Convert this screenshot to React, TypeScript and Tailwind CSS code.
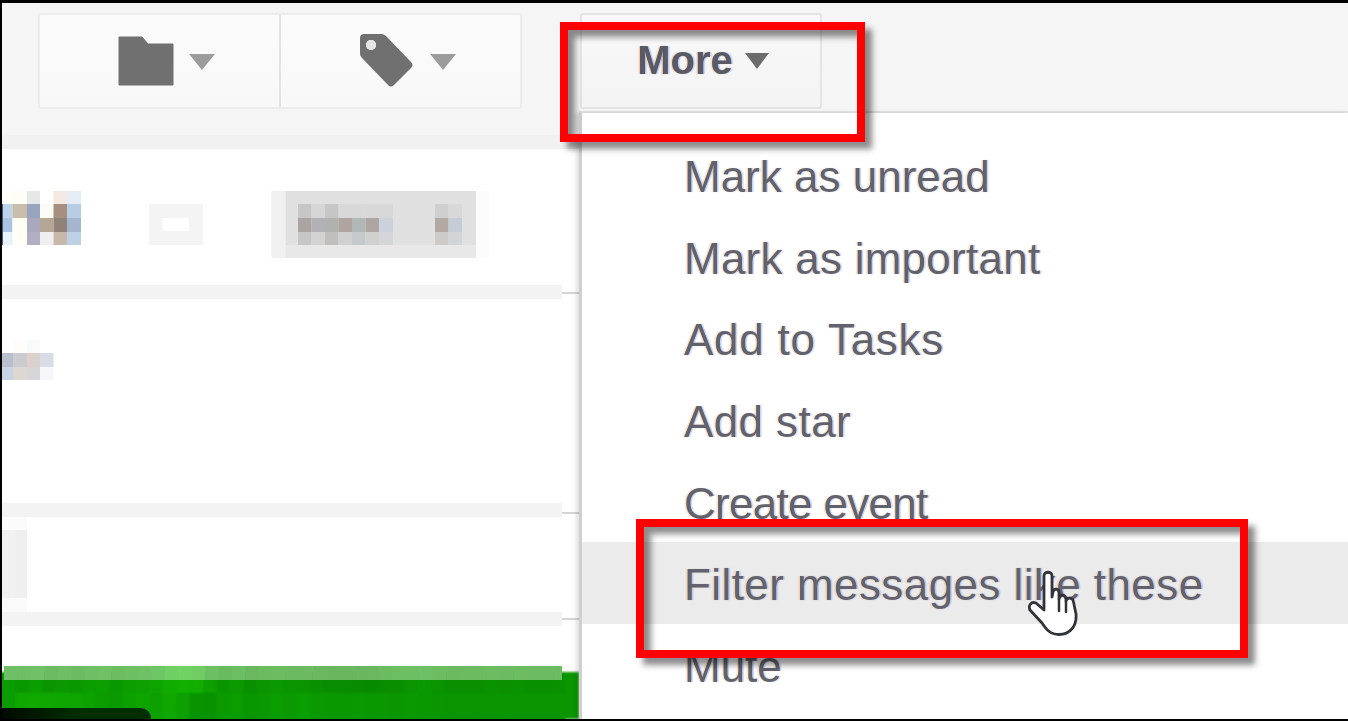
import React from "react";

type Block = [number, number, number, number, string];

const H = [3, 12.5, 27, 40, 53.5, 67, 81];
const rowFrom = (y: number, h: number, colors: string[], xs: number[] = H): Block[] =>
  colors.map((c, i) => [xs[i], y, xs[i + 1] - xs[i], h, c] as Block);

const X3 = [298, 311.5, 325, 338.5, 352, 365.5, 379, 393];
const X3b = [435, 448.5, 462];

// Mosaic coordinates: x is page x, y is local to the row
const row1: Block[] = [
  [2, 55, 1.5, 41, "#3a5f90"],
  ...rowFrom(42, 13, ["#fffefa", "#fffdf8", "#e3e7e8", "#ffffff", "#f3e8e2", "#e4ecf6"]),
  ...rowFrom(55, 14, ["#bcd3ea", "#c8bcab", "#97a5bd", "#fdfbf5", "#a68f80", "#b8cde4"]),
  ...rowFrom(69, 14, ["#a9c4e0", "#fffef5", "#aaa8bf", "#b6a795", "#8f8378", "#a3b6cd"]),
  ...rowFrom(83, 13, ["#e6f3fb", "#fffff5", "#b2afc4", "#efefef", "#c8b8aa", "#bdd0e4"]),
  [149, 55, 54, 41, "#f4f4f4"],
  [162.5, 69, 26.5, 13, "#ffffff"],
  [271.5, 42, 14, 67, "#f0f0f0"],
  [285.5, 42, 190.5, 54, "#e0e0e0"],
  [285.5, 96, 190.5, 13, "#e8e8e8"],
  [476, 42, 13, 67, "#fcfcfc"],
  ...rowFrom(55, 14, ["#c6c6c6", "#d6d6d6", "#c6c6c6", "#d8d8d8", "#d8d8d8", "#d8d8d8", "#d8d8d8"], X3),
  ...rowFrom(69, 14, ["#aba3a1", "#b2b2b6", "#b0b2b0", "#aea4a0", "#b2b8b8", "#aea6a2", "#ccd2dc"], X3),
  ...rowFrom(83, 13, ["#c6c6c6", "#d2d2d2", "#c2bebc", "#d0d0d0", "#c4caca", "#d0d0d0", "#d4d6da"], X3),
  ...rowFrom(55, 14, ["#cfcfcf", "#d8d8d8"], X3b),
  ...rowFrom(69, 14, ["#b2a8a4", "#c6ccd6"], X3b),
  ...rowFrom(83, 13, ["#cfcaca", "#d2d4d8"], X3b),
];

const X4 = [2, 13, 27, 40, 53.5];
const row2: Block[] = [
  ...rowFrom(41, 13, ["#ffffff", "#fffdf9", "#f9fafc", "#ffffff"], X4),
  ...rowFrom(54, 14, ["#b8c0d0", "#ccccd0", "#dcd0cc", "#d8dce6"], X4),
  ...rowFrom(68, 13, ["#c8d4e4", "#dcd8d0", "#d6d6d8", "#f6f7fa"], X4),
];

const row3: Block[] = [
  [2, 0, 25, 13, "#fbfbfb"],
  [2, 13, 25, 68, "#efefef"],
  [2, 13, 13, 68, "#f1f1f1"],
  [2, 81, 25, 14, "#fafafa"],
];

const greenTop = [
  "#0a9c00", "#0a9800", "#0b9e00", "#0a9500", "#0a9a00", "#0a9700", "#0b9c00", "#0c9f00", "#0a9800", "#0c9e00",
  "#0f9f00", "#0ea400", "#11ac00", "#12b000", "#11ae00", "#0da000", "#0a9500", "#0b9a00", "#089000", "#0a9600",
  "#0b9800", "#0a9400", "#0a9500", "#089000", "#088d00", "#088c00", "#088b00", "#088a00", "#088c00", "#098e00",
  "#0a9400", "#0a9800", "#099400", "#089000", "#098f00", "#098f00", "#0a9300", "#0a9000", "#0a9300", "#099000",
  "#099000", "#099100",
];
const greenBottom = [
  "#0a9c00", "#0ea800", "#0fa900", "#0fa800", "#0ea700", "#0ea600", "#0ca200", "#0b9c00", "#0a9a00", "#0ca000",
  "#0ea400", "#0da000", "#0fa800", "#0ca000", "#089300", "#089200", "#0a9a00", "#0b9c00", "#099500", "#0a9700",
  "#0b9c00", "#0a9a00", "#0b9e00", "#0a9900", "#0a9800", "#0a9700", "#0a9900", "#0a9800", "#0a9700", "#0a9600",
  "#0a9900", "#0a9800", "#099600", "#099400", "#099500", "#099400", "#099400", "#099500", "#099400", "#099400",
  "#099400", "#099400",
];
const lightBand = [
  "#6fbf66", "#6fbe65", "#70c067", "#6cba62", "#6fbe65", "#6cba62", "#6fbd65", "#70c066", "#6cbc62", "#6ebf64",
  "#6fc165", "#6dc664", "#6fcf63", "#70d263", "#6fcd63", "#6cbf62", "#6aba60", "#6cbe62", "#6ab75f", "#6bbb60",
  "#6cbc61", "#6bb960", "#6bba60", "#6ab75f", "#6ab65f", "#6ab65f", "#6ab55f", "#6bb760", "#6bbc61", "#6cc062",
  "#6ebf64", "#6ec066", "#6cbd62", "#6bba60", "#6cbb61", "#6cbb61", "#6cbc62", "#6cbb62", "#6cbc62", "#6cbb62",
  "#6cbb62", "#6cbc62",
];

function Mosaic({ h, blocks }: { h: number; blocks: Block[] }) {
  return (
    <svg width={577} height={h} viewBox={`2 0 577 ${h}`} className="block blur-[0.6px]">
      {blocks.map(([x, y, bw, bh, c], i) => (
        <rect key={i} x={x} y={y} width={bw} height={bh} fill={c} />
      ))}
    </svg>
  );
}

function Separator({ lineClass }: { lineClass: string }) {
  return (
    <div className="flex h-[14px] items-start">
      <div className="h-full w-[560px] bg-[#f3f3f3]" />
      <div className={`h-[2px] flex-1 bg-[#d4d4d4] blur-[0.4px] ${lineClass}`} />
    </div>
  );
}

function Caret({ color = "#9c9c9c", w = 26 }: { color?: string; w?: number }) {
  return (
    <svg width={w} height="16" viewBox="0 0 26 16" preserveAspectRatio="none" className="blur-[0.6px]">
      <path d="M0 0H26L13 16Z" fill={color} />
    </svg>
  );
}

function GreenStrip() {
  const step = 13.4;
  return (
    <svg width="577" height="53" viewBox="0 0 577 53" className="block">
      <g className="blur-[0.8px]">
        <rect x="-4" y="6" width="581" height="47" fill="#0a9600" />
        {greenTop.map((c, i) => (
          <rect key={`a${i}`} x={i * step} y="6" width={step + 0.5} height="27" fill={c} />
        ))}
        {greenBottom.map((c, i) => (
          <rect key={`b${i}`} x={i * step} y="27" width={step + 0.5} height="30" fill={c} />
        ))}
      </g>
      <g className="blur-[0.5px]">
        {lightBand.map((c, i) => (
          <rect key={`c${i}`} x={i * step + 2} y="0" width={Math.min(step + 0.5, 560 - i * step - 2)} height="14" fill={c} />
        ))}
      </g>
    </svg>
  );
}

function HandCursor() {
  return (
    <svg
      width="50"
      height="66"
      viewBox="0 0 50 66"
      className="pointer-events-none absolute left-[1028px] top-[570px] blur-[0.6px]"
    >
      <path
        d="M16 6C16 1 24 1 24 6V27L25 22C26 18 31 18 31 23V29C32 24 37 24 38 29V31C39 27 45 27 45.500 32L48 44C49 56 42 64.500 31 64.500C22 64.500 18 59 14 53L2 40C0 36 3 31 8 33L16 40Z"
        fill="#ffffff"
        stroke="#33333c"
        strokeWidth="2.800"
        strokeLinejoin="round"
      />
      <path d="M31 29V41M38 31V42" stroke="#33333c" strokeWidth="2.500" strokeLinecap="round" fill="none" />
    </svg>
  );
}

const items = [
  { t: "Mark as unread", c: "" },
  { t: "Mark as important", c: "tracking-[0.25px]" },
  { t: "Add to Tasks", c: "tracking-[0.75px]" },
  { t: "Add star", c: "tracking-[0.4px]" },
  { t: "Create event", c: "tracking-[-0.7px]" },
  { t: "Filter messages like these", c: "tracking-[0.42px]" },
  { t: "Mute", c: "" },
];

const fringe =
  "[text-shadow:-1.5px_0_1px_rgba(255,160,70,0.35),1.5px_0_1px_rgba(70,130,255,0.35)] blur-[0.7px]";

export default function App() {
  return (
    <div className="relative h-[721px] w-[1348px] overflow-hidden bg-black pb-[2px] pl-[2px] pt-[3px] font-['Liberation_Sans',Arial,sans-serif]">
      <div className="flex h-full bg-white">
        {/* Conversation list side */}
        <div className="flex w-[577px] shrink-0 flex-col">
          <div className="h-[132px] bg-[#f5f5f5] pl-[36px] pt-[10px]">
            <div className="flex h-[96px] w-[484px] rounded-[3px] border-2 border-[#ececec] bg-gradient-to-b from-[#fbfbfb] to-[#f8f8f8]">
              <div className="flex w-[241px] items-center border-r-2 border-[#e4e4e4] pl-[78px]">
                <svg width="56" height="50" viewBox="0 0 56 50" className="blur-[0.4px]">
                  <path d="M1 1H24L30 8H55V49H1Z" fill="#707070" stroke="#707070" strokeLinejoin="round" />
                </svg>
                <span className="ml-[15px] mt-[2px]">
                  <Caret />
                </span>
              </div>
              <div className="flex flex-1 items-center pl-[78px]">
                <svg width="54" height="54" viewBox="0 0 54 54" className="-mt-[3px] blur-[0.4px]">
                  <path
                    fillRule="evenodd"
                    d="M5 1H22C24 1 25 1.500 27 3L52 29C54 31 54 33 52 35L35 52C33 54 31 54 29 52L3 25C1.500 23 1 22 1 20V5C1 2.500 2.500 1 5 1ZM12 7A5 5 0 1 0 12 17A5 5 0 1 0 12 7Z"
                    fill="#707070"
                  />
                  <circle cx="12" cy="12" r="5" fill="#e6e6e6" />
                </svg>
                <span className="ml-[17px] mt-[2px]">
                  <Caret />
                </span>
              </div>
            </div>
          </div>
          <div className="h-[14px] bg-[#f1f1f1]" />
          <div className="h-[136px]">
            <Mosaic h={136} blocks={row1} />
          </div>
          <Separator lineClass="mt-[7px]" />
          <div className="h-[204px]">
            <Mosaic h={204} blocks={row2} />
          </div>
          <Separator lineClass="mt-[9px]" />
          <div className="h-[95px]">
            <Mosaic h={95} blocks={row3} />
          </div>
          <Separator lineClass="mt-[6px]" />
          <div className="h-[40px]" />
          <div className="relative h-[53px] overflow-hidden">
            <GreenStrip />
            <div className="absolute bottom-0 left-0 h-[11px] w-[149px] rounded-tr-[10px] bg-gradient-to-r from-[#000a00] via-[#002e00] to-[#002e00]" />
          </div>
        </div>

        {/* More menu side */}
        <div className="flex min-w-0 flex-1 flex-col">
          <div className="h-[110px] shrink-0 border-b-2 border-[#e2e2e2] bg-[#f5f5f5] pl-[1px] pt-[10px]">
            <div className="flex h-[96px] w-[242px] items-start justify-center rounded-[3px] border-2 border-[#e4e4e4] bg-gradient-to-b from-[#f9f9f9] to-[#f3f3f3] pl-[4px] pt-[22px]">
              <span className={`text-[40px] font-bold leading-[46px] text-[#5a5a66] ${fringe}`}>More</span>
              <span className="ml-[12px] mt-[16px]">
                <Caret color="#6c6c6c" w={24} />
              </span>
            </div>
          </div>
          <div className="relative flex-1 overflow-hidden border-l-[3px] border-[#cfcfcf] bg-white pt-[21px] shadow-[-3px_0_4px_rgba(0,0,0,0.12)]">
            {items.map(({ t, c }, i) => (
              <div
                key={t}
                className={`flex h-[81.7px] items-center whitespace-nowrap pl-[102px] ${i === 5 ? "bg-[#ebebeb]" : ""}`}
              >
                <span className={`mt-[4px] text-[44px] leading-[50px] text-[#62626c] ${c} ${fringe}`}>{t}</span>
              </div>
            ))}
          </div>
        </div>
      </div>

      {/* Annotations drawn over the screenshot */}
      <div className="pointer-events-none absolute left-[560px] top-[22px] h-[120px] w-[305px] border-8 border-[#ff0000] shadow-[7px_7px_6px_rgba(0,0,0,0.45),inset_7px_7px_6px_rgba(0,0,0,0.45)]" />
      <HandCursor />
      <div className="pointer-events-none absolute left-[636px] top-[519px] h-[139px] w-[612px] border-8 border-[#ff0000] shadow-[7px_7px_6px_rgba(0,0,0,0.45),inset_7px_7px_6px_rgba(0,0,0,0.45)]" />
    </div>
  );
}
